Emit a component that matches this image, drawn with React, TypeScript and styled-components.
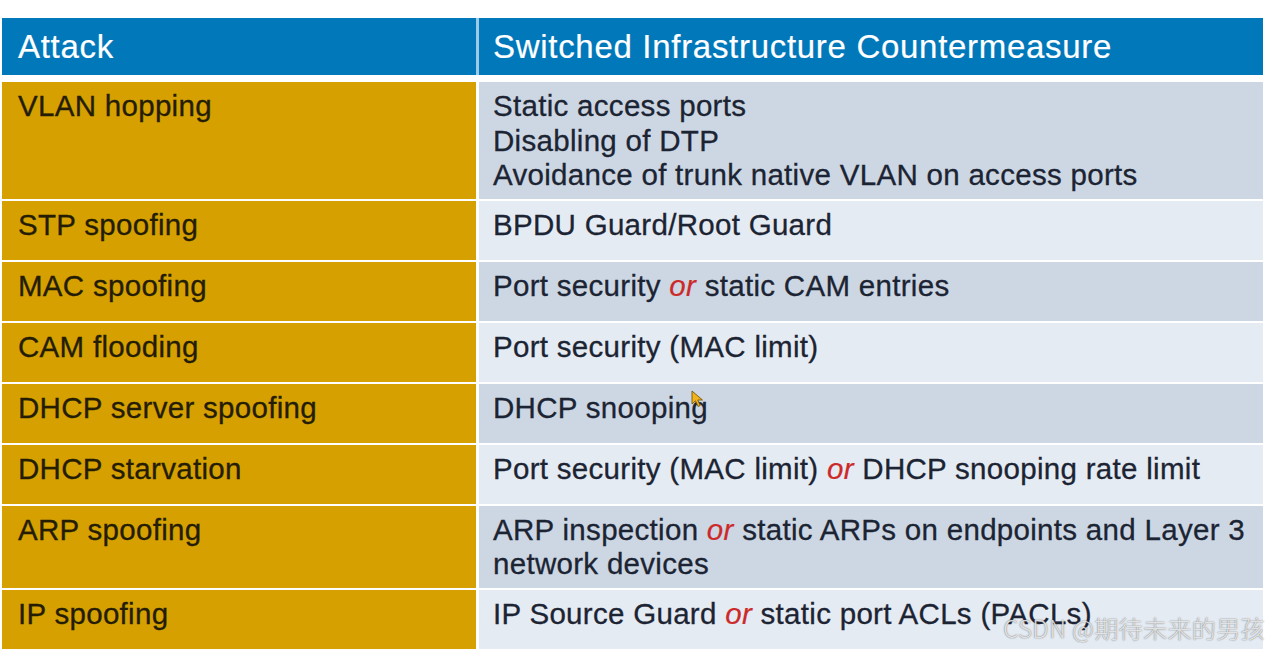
import React from "react";
import styled, { createGlobalStyle } from "styled-components";

const GlobalStyle = createGlobalStyle`
  html, body {
    margin: 0;
    padding: 0;
    background: #ffffff;
    overflow: hidden;
  }
  body {
    font-family: "Liberation Sans", Arial, Helvetica, sans-serif;
  }
`;

const Page = styled.div`
  position: relative;
  width: 1268px;
  height: 649px;
  padding: 18px 5px 0 2px;
  box-sizing: border-box;
  overflow: hidden;
  background: #ffffff;
`;

const Table = styled.div`
  display: flex;
  flex-direction: column;
  gap: 2px;
`;

const HeaderRow = styled.div`
  display: grid;
  grid-template-columns: 474px 1fr;
  column-gap: 3px;
  background: #9ccbe8;
  margin-bottom: 5px;
`;

const HeaderCell = styled.div<{ $pad: number }>`
  height: 57px;
  background: #0078ba;
  color: #ffffff;
  font-size: 33px;
  line-height: 58px;
  padding-left: ${(p) => p.$pad}px;
  box-sizing: border-box;
  white-space: nowrap;
  letter-spacing: 0.7px;
  -webkit-text-stroke: 0.2px #ffffff;
`;

const Row = styled.div`
  display: grid;
  grid-template-columns: 474px 1fr;
  column-gap: 3px;
  min-height: 59px;
`;

const AttackCell = styled.div`
  background: #d5a000;
  color: #241d04;
  font-size: 29.5px;
  line-height: 34.5px;
  padding: 7px 0 6px 16px;
  box-sizing: border-box;
  white-space: nowrap;
  letter-spacing: 0.3px;
  -webkit-text-stroke: 0.3px #241d04;
`;

const MeasureCell = styled.div<{ $dark: boolean }>`
  background: ${(p) => (p.$dark ? "#ccd7e3" : "#e5ebf2")};
  color: #1c2433;
  font-size: 29.5px;
  line-height: 34.5px;
  padding: 7px 0 6px 14px;
  box-sizing: border-box;
  white-space: nowrap;
  letter-spacing: 0.3px;
  -webkit-text-stroke: 0.3px #1c2433;
`;

const Line = styled.div``;

const Or = styled.span`
  color: #cc2a2a;
  font-style: italic;
  -webkit-text-stroke: 0.2px #cc2a2a;
`;

const Watermark = styled.div`
  position: absolute;
  right: 3px;
  bottom: 9px;
  font-family: "Noto Sans CJK SC", "Noto Sans", sans-serif;
  font-size: 24px;
  font-weight: 300;
  letter-spacing: 0.4px;
  color: rgba(255, 255, 255, 0.8);
  text-shadow: 0 0 1px rgba(70, 70, 70, 0.7), 0 0 2px rgba(70, 70, 70, 0.35);
  white-space: nowrap;
  line-height: 1;
`;

const Cursor = styled.svg`
  position: absolute;
  left: 691px;
  top: 390px;
`;

type Part = string | { or: true };

type Entry = {
  attack: string;
  lines: Part[][];
};

const OR: Part = { or: true };

const rows: Entry[] = [
  {
    attack: "VLAN hopping",
    lines: [
      ["Static access ports"],
      ["Disabling of DTP"],
      ["Avoidance of trunk native VLAN on access ports"],
    ],
  },
  { attack: "STP spoofing", lines: [["BPDU Guard/Root Guard"]] },
  {
    attack: "MAC spoofing",
    lines: [["Port security ", OR, " static CAM entries"]],
  },
  { attack: "CAM flooding", lines: [["Port security (MAC limit)"]] },
  { attack: "DHCP server spoofing", lines: [["DHCP snooping"]] },
  {
    attack: "DHCP starvation",
    lines: [["Port security (MAC limit) ", OR, " DHCP snooping rate limit"]],
  },
  {
    attack: "ARP spoofing",
    lines: [
      ["ARP inspection ", OR, " static ARPs on endpoints and Layer 3"],
      ["network devices"],
    ],
  },
  {
    attack: "IP spoofing",
    lines: [["IP Source Guard ", OR, " static port ACLs (PACLs)"]],
  },
];

export default function App() {
  return (
    <>
      <GlobalStyle />
      <Page>
        <Table>
          <HeaderRow>
            <HeaderCell $pad={16}>Attack</HeaderCell>
            <HeaderCell $pad={14}>Switched Infrastructure Countermeasure</HeaderCell>
          </HeaderRow>
          {rows.map((r, i) => (
            <Row key={r.attack}>
              <AttackCell>{r.attack}</AttackCell>
              <MeasureCell $dark={i % 2 === 0}>
                {r.lines.map((ln, j) => (
                  <Line key={j}>
                    {ln.map((p, k) =>
                      typeof p === "string" ? (
                        <React.Fragment key={k}>{p}</React.Fragment>
                      ) : (
                        <Or key={k}>or</Or>
                      )
                    )}
                  </Line>
                ))}
              </MeasureCell>
            </Row>
          ))}
        </Table>
        <Cursor width="14" height="18" viewBox="0 0 14 18">
          <path
            d="M1 1 L1 14 L4.5 10.8 L7 16.5 L9.2 15.5 L6.8 10 L11.5 10 Z"
            fill="#f2b21c"
            stroke="#6b4a00"
            strokeWidth="0.8"
          />
        </Cursor>
        <Watermark>CSDN @期待未来的男孩</Watermark>
      </Page>
    </>
  );
}
